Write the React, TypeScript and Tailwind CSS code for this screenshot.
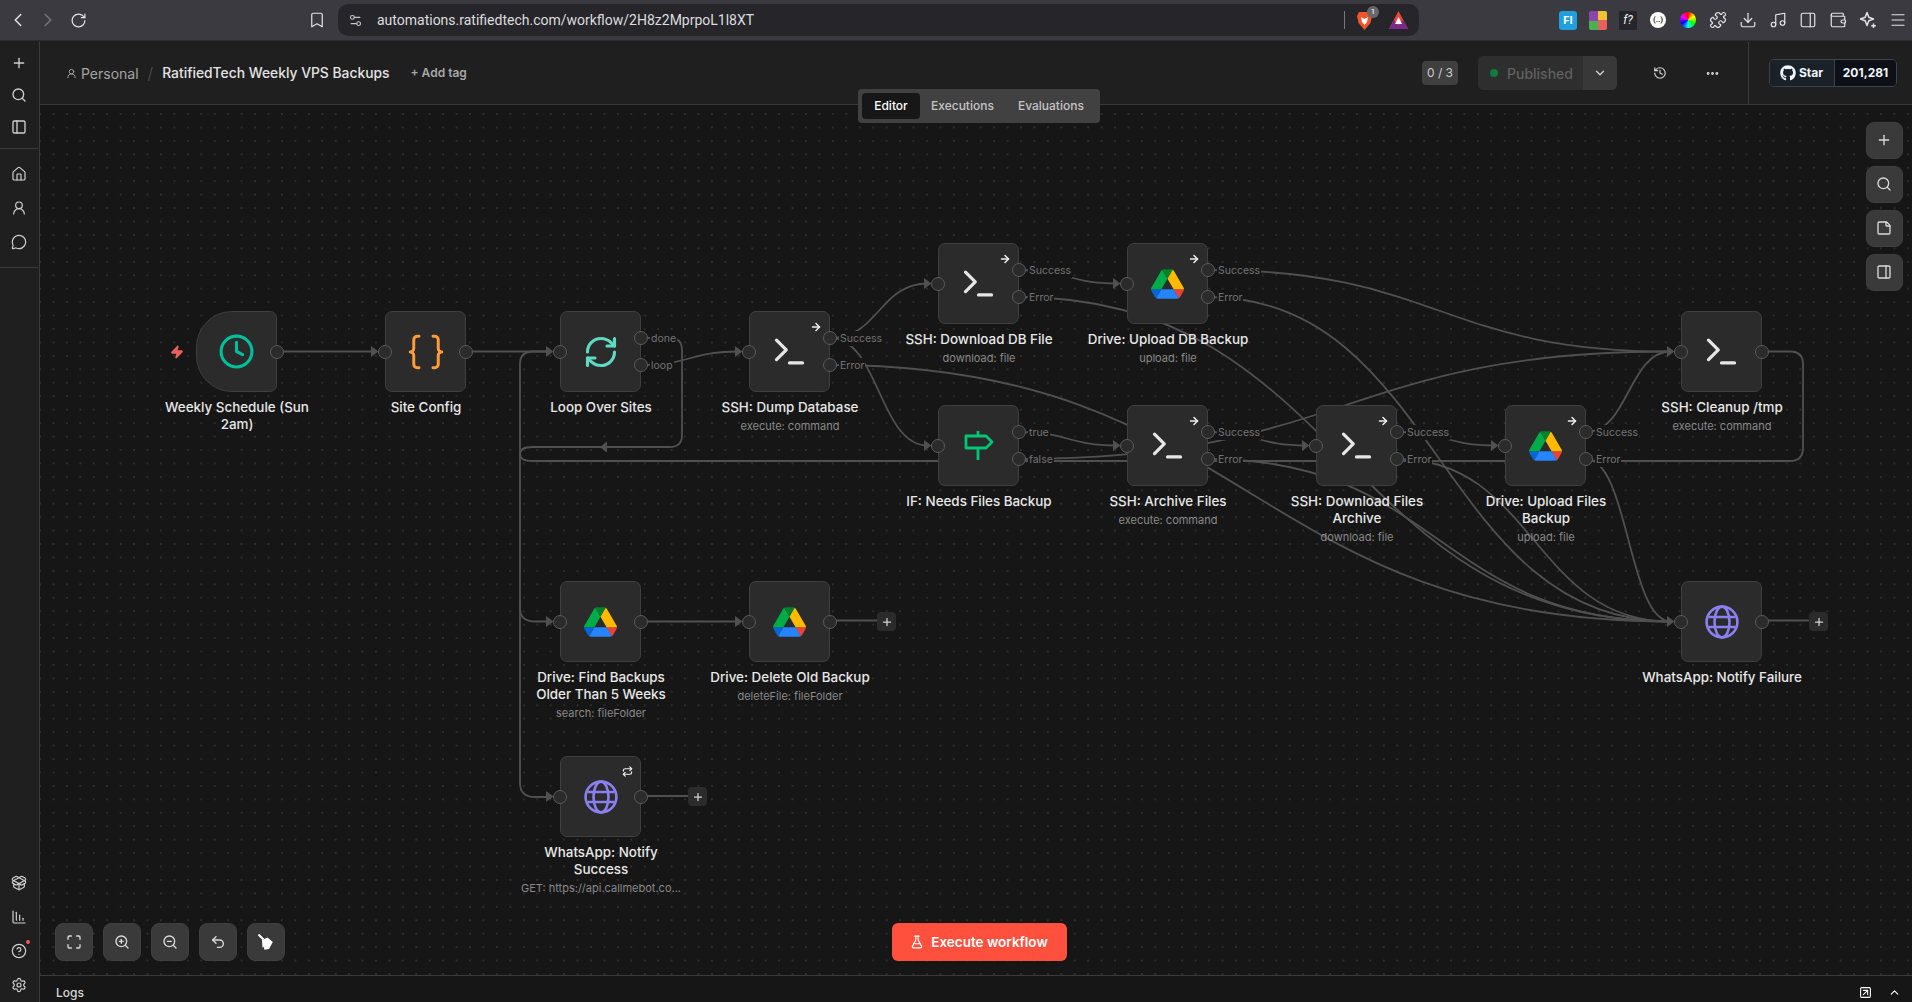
import type { ReactNode } from "react";
import {
  ArrowRight, Bookmark, Braces, ChartColumnDecreasing, ChevronDown, ChevronLeft, ChevronRight, ChevronUp,
  CircleHelp, Clock, Download, Ellipsis, FlaskConical, History, House, Maximize, Menu, MessageCircle, Music,
  PackageOpen, PanelLeft, PanelRight, Plus, Puzzle, RefreshCw, Repeat, RotateCw, Search, Settings, Settings2,
  SquareArrowUpRight, StickyNote, Terminal, Undo2, UserRound, Wallet, Zap, ZoomIn, ZoomOut,
} from "lucide-react";
import { FaGithub } from "react-icons/fa";

// all graph coordinates are page pixels, the canvas starts at (40, 105)
const CANVAS_X = 40;
const CANVAS_Y = 105;

type NodeData = {
  id: string;
  x: number;
  y: number;
  title: string;
  sub?: string;
  icon: ReactNode;
  outputs?: string[];
  badge?: "arrow" | "repeat";
  trigger?: boolean;
  plus?: boolean;
};

function DriveIcon() {
  return (
    <svg width="33" height="30" viewBox="0 0 87.3 78">
      <path d="m6.6 66.85 3.85 6.65c.8 1.4 1.95 2.5 3.3 3.3l13.75-23.8h-27.5c0 1.55.4 3.1 1.2 4.5z" fill="#0066da" />
      <path d="m43.65 25-13.75-23.8c-1.35.8-2.5 1.9-3.3 3.3l-25.4 44a9.06 9.06 0 0 0 -1.2 4.5h27.5z" fill="#00ac47" />
      <path d="m73.55 76.8c1.35-.8 2.5-1.9 3.3-3.3l1.6-2.75 7.65-13.25c.8-1.4 1.2-2.95 1.2-4.5h-27.502l5.852 11.5z" fill="#ea4335" />
      <path d="m43.65 25 13.75-23.8c-1.35-.8-2.9-1.2-4.5-1.2h-18.5c-1.6 0-3.15.45-4.5 1.2z" fill="#00832d" />
      <path d="m59.8 53h-32.3l-13.75 23.8c1.35.8 2.9 1.2 4.5 1.2h50.8c1.6 0 3.15-.45 4.5-1.2z" fill="#2684fc" />
      <path d="m73.4 26.5-12.7-22c-.8-1.4-1.95-2.5-3.3-3.3l-13.75 23.8 16.15 28h27.45c0-1.55-.4-3.1-1.2-4.5z" fill="#ffba00" />
    </svg>
  );
}

function GlobeIcon() {
  return (
    <svg width="34" height="34" viewBox="0 0 34 34" fill="none" stroke="#8b80f0" strokeWidth="2.6">
      <circle cx="17" cy="17" r="15.4" />
      <ellipse cx="17" cy="17" rx="7.5" ry="15.4" />
      <path d="M3.5 12h27M3.5 22h27" />
    </svg>
  );
}

function SignIcon() {
  return (
    <svg width="30" height="29" viewBox="0 0 30 29" fill="none" stroke="#00c778" strokeWidth="2.8" strokeLinejoin="round">
      <path d="M14 0v5M14 17v12" />
      <path d="M2 5h20l6 6-6 6H2z" />
    </svg>
  );
}

function BroomIcon() {
  return (
    <svg width="16" height="16" viewBox="0 0 16 16">
      <path d="M0.500 0.500L5.500 5.500" stroke="#fff" strokeWidth="2" />
      <path d="M4 6L9.500 3.500L14.800 8L11 15L6.500 15.700L5.500 12.500L4.500 14z" fill="#fff" />
    </svg>
  );
}

function StarPlusIcon() {
  return (
    <svg width="18" height="18" viewBox="0 0 18 18" fill="none" stroke="currentColor" strokeWidth="1.5" strokeLinejoin="round">
      <path d="M8 1.500L9.800 6.200L14.500 8L9.800 9.800L8 14.500L6.200 9.800L1.500 8L6.200 6.200z" />
      <path d="M14.500 12.500v4.500M12.200 14.700h4.600" />
    </svg>
  );
}

const term = <Terminal size={39} color="#e6e6e6" strokeWidth={2} />;
const drive = <DriveIcon />;
const globe = <GlobeIcon />;
const sshOut = ["Success", "Error"];

const nodes: NodeData[] = [
  { id: "schedule", x: 196, y: 311, title: "Weekly Schedule (Sun\n2am)", icon: <Clock size={37} color="#00bf9a" strokeWidth={2} />, trigger: true, outputs: [""] },
  { id: "config", x: 385, y: 311, title: "Site Config", icon: <Braces size={42} color="#ff9b3a" strokeWidth={1.7} />, outputs: [""] },
  { id: "loop", x: 560, y: 311, title: "Loop Over Sites", icon: <RefreshCw size={36} color="#5fd9c1" strokeWidth={2.1} />, outputs: ["done", "loop"] },
  { id: "dump", x: 749, y: 311, title: "SSH: Dump Database", sub: "execute: command", icon: term, outputs: sshOut, badge: "arrow" },
  { id: "dlDb", x: 938, y: 243, title: "SSH: Download DB File", sub: "download: file", icon: term, outputs: sshOut, badge: "arrow" },
  { id: "upDb", x: 1127, y: 243, title: "Drive: Upload DB Backup", sub: "upload: file", icon: drive, outputs: sshOut, badge: "arrow" },
  { id: "if", x: 938, y: 405, title: "IF: Needs Files Backup", icon: <SignIcon />, outputs: ["true", "false"] },
  { id: "archive", x: 1127, y: 405, title: "SSH: Archive Files", sub: "execute: command", icon: term, outputs: sshOut, badge: "arrow" },
  { id: "dlFiles", x: 1316, y: 405, title: "SSH: Download Files\nArchive", sub: "download: file", icon: term, outputs: sshOut, badge: "arrow" },
  { id: "upFiles", x: 1505, y: 405, title: "Drive: Upload Files\nBackup", sub: "upload: file", icon: drive, outputs: sshOut, badge: "arrow" },
  { id: "cleanup", x: 1681, y: 311, title: "SSH: Cleanup /tmp", sub: "execute: command", icon: term, outputs: [""] },
  { id: "find", x: 560, y: 581, title: "Drive: Find Backups\nOlder Than 5 Weeks", sub: "search: fileFolder", icon: drive, outputs: [""] },
  { id: "delete", x: 749, y: 581, title: "Drive: Delete Old Backup", sub: "deleteFile: fileFolder", icon: drive, outputs: [""], plus: true },
  { id: "wsOk", x: 560, y: 756, title: "WhatsApp: Notify\nSuccess", sub: "GET: https://api.callmebot.co...", icon: globe, outputs: [""], badge: "repeat", plus: true },
  { id: "wsFail", x: 1681, y: 581, title: "WhatsApp: Notify Failure", icon: globe, outputs: [""], plus: true },
];

const W = 81;

function byId(id: string) {
  return nodes.find((n) => n.id === id) as NodeData;
}

function outY(n: NodeData, i: number) {
  return (n.outputs?.length ?? 1) === 2 ? n.y + 27 + i * 27 : n.y + 40.5;
}

function bezier(from: string, out: number, to: string) {
  const a = byId(from);
  const b = byId(to);
  const x1 = a.x + W;
  const y1 = outY(a, out);
  const x2 = b.x - 10;
  const y2 = b.y + 40.5;
  const d = (x2 - x1) / 2;
  return `M${x1} ${y1}C${x1 + d} ${y1} ${x2 - d} ${y2} ${x2} ${y2}`;
}

const edges: string[] = [
  bezier("schedule", 0, "config"),
  bezier("config", 0, "loop"),
  bezier("loop", 1, "dump"),
  bezier("dump", 0, "dlDb"),
  bezier("dump", 0, "if"),
  bezier("dump", 1, "wsFail"),
  bezier("dlDb", 0, "upDb"),
  bezier("dlDb", 1, "wsFail"),
  bezier("upDb", 0, "cleanup"),
  bezier("upDb", 1, "wsFail"),
  bezier("if", 0, "archive"),
  bezier("if", 1, "cleanup"),
  bezier("archive", 0, "dlFiles"),
  bezier("archive", 1, "wsFail"),
  bezier("dlFiles", 0, "upFiles"),
  bezier("dlFiles", 1, "wsFail"),
  bezier("upFiles", 0, "cleanup"),
  bezier("upFiles", 1, "wsFail"),
  bezier("find", 0, "delete"),
  // cleanup back to the loop input, runs behind the nodes
  "M1762 351.5H1790Q1803 351.5 1803 364V448Q1803 461 1790 461H532Q520 461 520 454V364Q520 351.5 533 351.5H550",
  // loop done to the two lower branches
  "M641 338H670Q682 338 682 350V435Q682 447 670 447H532Q520 447 520 454V608Q520 621.5 535 621.5H550",
  "M520 600V783Q520 797 535 797H550",
  // stubs towards the plus buttons
  "M830 620.5H878",
  "M641 796H689",
  "M1762 620.5H1810",
];

const targets = ["config", "loop", "dump", "dlDb", "upDb", "if", "archive", "dlFiles", "upFiles", "cleanup", "find", "delete", "wsOk", "wsFail"];

function Edges() {
  return (
    <svg className="absolute inset-0" width="1872" height="870" viewBox={`${CANVAS_X} ${CANVAS_Y} 1872 870`} fill="none">
      {edges.map((d, i) => (
        <path key={i} d={d} stroke="#505050" strokeWidth="1.8" />
      ))}
      {targets.map((id) => {
        const n = byId(id);
        const y = n.y + 40.5;
        return <polygon key={id} points={`${n.x - 14},${y - 5.5} ${n.x - 6.5},${y} ${n.x - 14},${y + 5.5}`} fill="#505050" />;
      })}
      <polygon points="600,447 607,441.500 607,452.500" fill="#505050" />
    </svg>
  );
}

function FlowNode({ n }: { n: NodeData }) {
  return (
    <div
      className={`absolute w-[81px] h-[81px] bg-[#2b2b2b] border border-[#3f3f3f] flex items-center justify-center rounded-[7px] ${n.trigger ? "rounded-l-[36px]" : ""}`}
      style={{ left: n.x - CANVAS_X, top: n.y - CANVAS_Y }}
    >
      {n.icon}
      {n.badge === "arrow" && <ArrowRight size={12} strokeWidth={3} color="#f0f0f0" className="absolute top-[9px] right-[7px]" />}
      {n.badge === "repeat" && <Repeat size={11} strokeWidth={2.6} color="#f0f0f0" className="absolute top-[9px] right-[7px]" />}
      {n.trigger ? (
        <Zap size={14} fill="#e8605c" color="#e8605c" className="absolute left-[-27px] top-[33px]" />
      ) : (
        <div className="absolute left-[-8px] top-[32.5px] w-[14px] h-[14px] rounded-full bg-[#2b2b2b] border border-[#5a5a5a]" />
      )}
      {(n.outputs ?? []).map((label, i) => (
        <div
          key={i}
          className="absolute left-[73px] w-[14px] h-[14px] rounded-full bg-[#2b2b2b] border border-[#5a5a5a]"
          style={{ top: outY(n, i) - n.y - 8 }}
        >
          {label && (
            <span className="absolute left-[15px] top-[-1.5px] h-[15px] px-[1px] bg-[#161616] text-[10.5px] leading-[15px] text-[#747474]">
              {label}
            </span>
          )}
        </div>
      ))}
      {n.plus && (
        <div className="absolute left-[127px] top-[30px] w-[19px] h-[19px] rounded-[4px] bg-[#2b2b2b] flex items-center justify-center">
          <Plus size={12} color="#d4d4d4" strokeWidth={2.5} />
        </div>
      )}
      <div className="absolute top-[87px] left-[-45px] w-[170px] text-center pointer-events-none">
        <div className="text-[13.4px] leading-[17px] font-medium text-[#e8e8e8] whitespace-pre-line">{n.title}</div>
        {n.sub && <div className="mt-[2px] text-[11px] leading-[17px] text-[#8a8a8a] whitespace-nowrap">{n.sub}</div>}
      </div>
    </div>
  );
}

function ToolButton({ children }: { children: ReactNode }) {
  return <div className="w-[37.5px] h-[37.5px] rounded-[8px] bg-[#3a3a3a] border border-[#3f3f3f] flex items-center justify-center text-[#dcdcdc]">{children}</div>;
}

function BrowserBar() {
  return (
    <div className="h-[41px] bg-[#3a3a40] border-b border-[#2c2c30] flex items-center text-[#e4e4e6] font-['Roboto',sans-serif]">
      <div className="flex items-center w-[338px] pl-[7px]">
        <ChevronLeft size={22} strokeWidth={1.6} />
        <ChevronRight size={22} strokeWidth={1.6} className="ml-[8px] text-[#77777c]" />
        <RotateCw size={17} strokeWidth={1.7} className="ml-[11px]" />
        <Bookmark size={18} strokeWidth={1.6} className="ml-[221px]" />
      </div>
      <div className="w-[1081px] h-[32px] rounded-[10px] bg-[#26262a] flex items-center pl-[10px] pr-[11px]">
        <Settings2 size={15} strokeWidth={1.7} className="text-[#c8c8cc]" />
        <span className="ml-[14px] text-[14px] text-[#dcdcdf]">automations.ratifiedtech.com/workflow/2H8z2MprpoL1l8XT</span>
        <div className="ml-auto w-px h-[18px] bg-[#77777c]" />
        <div className="relative ml-[12px] w-[15px] h-[19px]">
          <svg width="15" height="19" viewBox="0 0 15 19">
            <path d="M2 1h11l2 4-1.500 7L7.500 19 1.500 12 0 5z" fill="#f1542b" />
            <path d="M4 6l3.500 2L11 6l-1 5-2.500 3L5 11z" fill="#fff" />
          </svg>
          <span className="absolute -top-[5px] left-[10px] w-[12px] h-[12px] rounded-full bg-[#66666c] text-[8px] leading-[12px] text-center text-white">1</span>
        </div>
        <svg width="19" height="18" viewBox="0 0 19 18" className="ml-[17px]">
          <path d="M9.500 0L19 18H0z" fill="#e8483c" />
          <path d="M0 18L5 9l4.500 5 4.500-5 5 9z" fill="#7a2a8c" />
          <path d="M9.500 6L13 13H6z" fill="#fff" />
        </svg>
      </div>
      <div className="flex-1 flex items-center justify-end pr-[5px] gap-[12px]">
        <div className="w-[18px] h-[19px] rounded-[3px] bg-[#1f9fdc] text-white text-[11px] font-bold leading-[19px] text-center">FI</div>
        <div className="w-[18px] h-[19px] rounded-[2px] bg-[conic-gradient(#f1c232_0_25%,#e8605c_25%_50%,#4caf50_50%_75%,#8e44ad_75%)]" />
        <div className="w-[18px] h-[19px] bg-[#26262a] text-[12px] italic leading-[19px] text-center text-[#f0f0f0]">f?</div>
        <div className="w-[18px] flex justify-center">
          <div className="w-[16px] h-[16px] rounded-full bg-white text-[8px] leading-[16px] text-center font-bold text-[#222]">(..)</div>
        </div>
        <div className="w-[18px] flex justify-center">
          <div className="w-[16px] h-[16px] rounded-full bg-[conic-gradient(#f00,#ff0,#0f0,#0ff,#00f,#f0f,#f00)]" />
        </div>
        <Puzzle size={18} strokeWidth={1.6} />
        <Download size={18} strokeWidth={1.6} />
        <Music size={18} strokeWidth={1.6} />
        <PanelRight size={18} strokeWidth={1.6} />
        <Wallet size={18} strokeWidth={1.6} />
        <StarPlusIcon />
        <Menu size={18} strokeWidth={1.6} />
      </div>
    </div>
  );
}

function Sidebar() {
  return (
    <aside className="w-[40px] shrink-0 bg-[#1f1f1f] border-r border-[#3a3a3a] flex flex-col items-center text-[#d0d0d0] pr-[1px]">
      <div className="h-[108px] w-full border-b border-[#3a3a3a] flex flex-col items-center pt-[14px] gap-[16px]">
        <Plus size={16} strokeWidth={2} />
        <Search size={16} strokeWidth={2} />
        <PanelLeft size={16} strokeWidth={2} />
      </div>
      <div className="h-[119px] w-full border-b border-[#3a3a3a] flex flex-col items-center pt-[17px] gap-[18px]">
        <House size={16} strokeWidth={1.8} />
        <UserRound size={16} strokeWidth={1.8} />
        <MessageCircle size={16} strokeWidth={1.8} />
      </div>
      <div className="mt-auto flex flex-col items-center gap-[18px] pb-[9px]">
        <PackageOpen size={16} strokeWidth={1.8} />
        <ChartColumnDecreasing size={16} strokeWidth={1.8} />
        <div className="relative">
          <CircleHelp size={16} strokeWidth={1.8} />
          <div className="absolute -top-[3px] -right-[3px] w-[4px] h-[4px] rounded-full bg-[#ef5a5a]" />
        </div>
        <Settings size={16} strokeWidth={1.8} />
      </div>
    </aside>
  );
}

function Header() {
  return (
    <header className="relative h-[64px] bg-[#1f1f1f] border-b border-[#3a3a3a] flex items-center pl-[26px] pt-[1px]">
      <UserRound size={11} color="#a8a8a8" strokeWidth={2} />
      <span className="ml-[4px] text-[14px] text-[#a3a3a3]">Personal</span>
      <span className="ml-[9px] text-[16px] font-light text-[#4f4f4f]">/</span>
      <span className="ml-[9px] text-[13.85px] font-medium text-[#e4e4e4]">RatifiedTech Weekly VPS Backups</span>
      <span className="ml-[21px] text-[12px] font-semibold text-[#a8a8a8]">+ Add tag</span>

      <div className="ml-auto flex items-center h-full">
        <div className="w-[36px] h-[24px] rounded-[4px] bg-[#3f3f3f] text-[12px] leading-[24px] text-center text-[#cfcfcf]">0 / 3</div>
        <div className="ml-[20px] flex h-[34px] w-[139px] rounded-[5px] overflow-hidden">
          <div className="flex-1 bg-[#2e2e2e] flex items-center pl-[12px]">
            <div className="w-[8px] h-[8px] rounded-full bg-[#127a3f]" />
            <span className="ml-[9px] text-[14px] font-medium text-[#606060]">Published</span>
          </div>
          <div className="w-[34px] bg-[#383838] flex items-center justify-center">
            <ChevronDown size={14} color="#d4d4d4" strokeWidth={2.2} />
          </div>
        </div>
        <History size={14} color="#d4d4d4" strokeWidth={2} className="ml-[36px]" />
        <Ellipsis size={15} color="#d4d4d4" strokeWidth={2.6} className="ml-[38px]" />
        <div className="ml-[28px] h-full w-px bg-[#3a3a3a]" />
        <div className="ml-[20px] mr-[15px] flex h-[28px] w-[128px] rounded-[5px] border border-[#3d444d] overflow-hidden text-[12px] font-bold text-[#f0f6fc]">
          <div className="w-[64px] bg-[#1a2129] flex items-center pl-[10px] gap-[3px]">
            <FaGithub size={16} />
            <span>Star</span>
          </div>
          <div className="flex-1 bg-[#0d1117] border-l border-[#3d444d] flex items-center justify-center">201,281</div>
        </div>
      </div>

      <div className="absolute left-[818px] top-[48px] w-[242px] h-[34px] z-10 rounded-[4px] bg-[#414141] flex items-center p-[4px] text-[12px] font-medium text-[#c4c4c4]">
        <div className="w-[58px] h-[26px] rounded-[4px] bg-[#171717] text-white leading-[26px] text-center">Editor</div>
        <span className="ml-[11px]">Executions</span>
        <span className="ml-[24px]">Evaluations</span>
      </div>
    </header>
  );
}

function Canvas() {
  return (
    <main className="relative flex-1 overflow-hidden bg-[#161616] bg-[radial-gradient(circle,#3e3e3e_0.55px,transparent_0.85px)] bg-size-[13.45px_13.45px] bg-position-[-6.7px_2.3px]">
      <Edges />
      {nodes.map((n) => (
        <FlowNode key={n.id} n={n} />
      ))}
      <div className="absolute left-[1825.500px] top-[16.500px] flex flex-col gap-[6.500px]">
        <ToolButton><Plus size={16} /></ToolButton>
        <ToolButton><Search size={16} /></ToolButton>
        <ToolButton><StickyNote size={16} /></ToolButton>
        <ToolButton><PanelRight size={16} /></ToolButton>
      </div>
      <div className="absolute left-[15px] top-[818px] flex gap-[10.500px]">
        <ToolButton><Maximize size={16} /></ToolButton>
        <ToolButton><ZoomIn size={16} /></ToolButton>
        <ToolButton><ZoomOut size={16} /></ToolButton>
        <ToolButton><Undo2 size={16} /></ToolButton>
        <ToolButton><BroomIcon /></ToolButton>
      </div>
      <button className="absolute left-[851.500px] top-[818px] w-[175px] h-[38px] rounded-[6px] bg-[#ff4f3d] flex items-center justify-center gap-[7px] text-[13.5px] font-semibold text-white">
        <FlaskConical size={14} strokeWidth={2} />
        Execute workflow
      </button>
    </main>
  );
}

export default function App() {
  return (
    <div className="h-[1002px] w-[1912px] overflow-hidden flex flex-col bg-[#161616] font-['Inter',sans-serif]">
      <BrowserBar />
      <div className="flex flex-1 min-h-0">
        <Sidebar />
        <div className="flex-1 min-w-0 flex flex-col">
          <Header />
          <Canvas />
          <footer className="h-[27px] shrink-0 bg-[#161616] border-t border-[#3a3a3a] flex items-center pl-[16px] pr-[11px] pt-[7px] text-[12px] font-medium text-[#d8d8d8]">
            Logs
            <SquareArrowUpRight size={13} className="ml-auto text-white" />
            <ChevronUp size={13} className="ml-[16px] text-white" />
          </footer>
        </div>
      </div>
    </div>
  );
}
